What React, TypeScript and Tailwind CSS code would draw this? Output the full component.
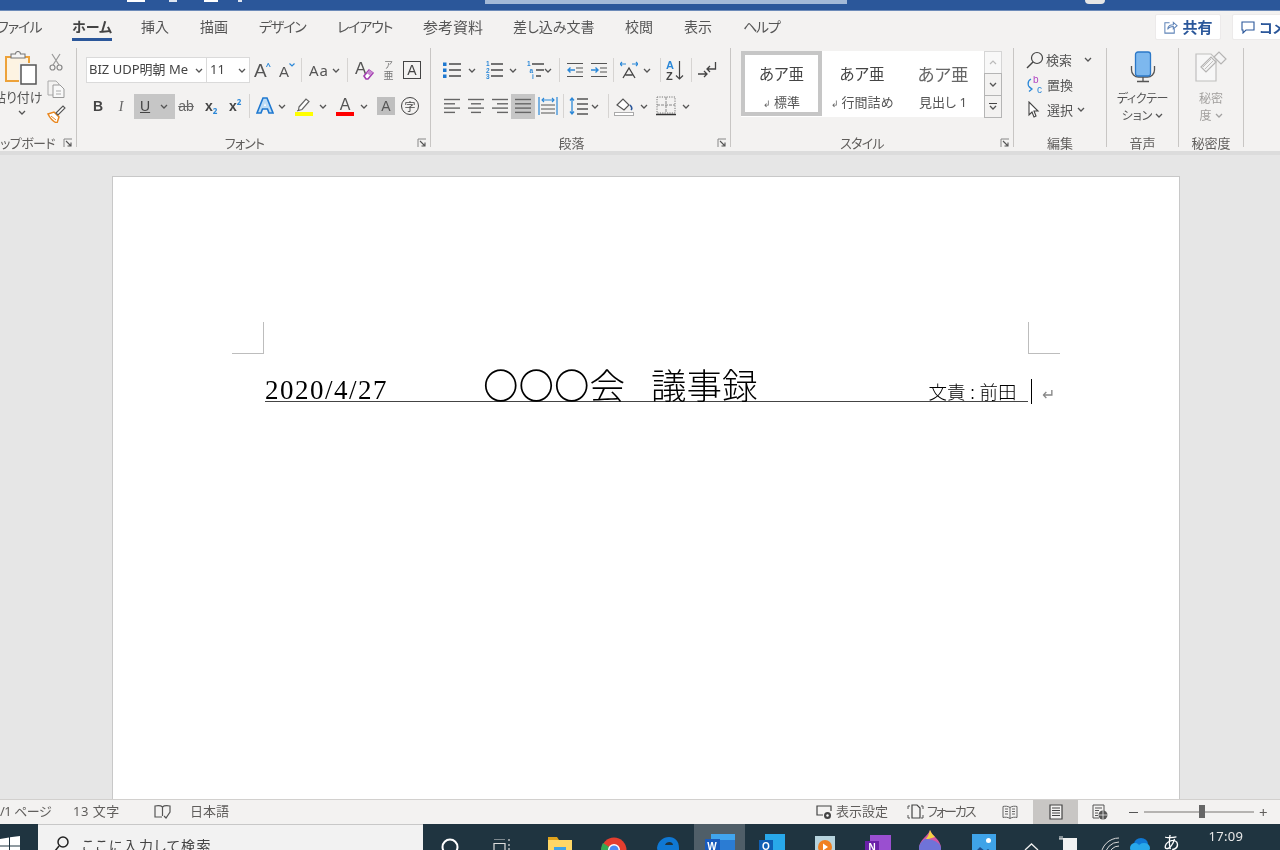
import React from "react";

const S = "#4a4a4a";
const B = "#2b88d8";

function Chev({ c = "" }: { c?: string }) {
  return (
    <svg viewBox="0 0 8 5" className={"w-[8px] h-[5px] shrink-0 " + c}>
      <path d="M1 1l3 3 3-3" fill="none" stroke="#555" strokeWidth="1.3" />
    </svg>
  );
}
function Sep({ c = "" }: { c?: string }) {
  return <div className={"w-px h-[24px] bg-[#d6d4d2] shrink-0 " + c} />;
}
function Launcher() {
  return (
    <svg viewBox="0 0 10 10" className="w-[10px] h-[10px] shrink-0">
      <path d="M1 9V1h8" fill="none" stroke="#888" strokeWidth="1" />
      <path d="M3 3l5 5M8 4.500V8H4.500" fill="none" stroke="#555" strokeWidth="1.100" />
    </svg>
  );
}
function Lines({ rows, c = "" }: { rows: [number, number][]; c?: string }) {
  return (
    <svg viewBox="0 0 18 18" className={"w-[18px] h-[18px] shrink-0 " + c}>
      {rows.map((r, i) => (
        <path key={i} d={`M${r[0]} ${2.5 + i * 4.3}H${r[1]}`} stroke="#666" strokeWidth="1.4" />
      ))}
    </svg>
  );
}
function ListIcon({ kind, c = "" }: { kind: "b" | "n" | "m"; c?: string }) {
  const labels = kind === "n" ? ["1", "2", "3"] : kind === "m" ? ["1", "a", "i"] : null;
  return (
    <svg viewBox="0 0 20 20" className={"w-[20px] h-[20px] shrink-0 " + c}>
      {labels
        ? labels.map((l, i) => (
            <text key={i} x={kind === "m" ? 1 + i * 2.5 : 2} y={6 + i * 6.5} fontSize="6.5" fontWeight="700" fill={B} fontFamily="Liberation Sans">
              {l}
            </text>
          ))
        : [0, 1, 2].map((i) => <rect key={i} x="1" y={2.5 + i * 6} width="3.5" height="3.5" fill="#1e78d0" />)}
      {kind === "m" ? (
        <path d="M6 4h12M10 10h8M10 16h5" stroke={S} strokeWidth="1.3" />
      ) : (
        <path d="M7 4h12M7 10h12M7 16h12" stroke={S} strokeWidth="1.3" />
      )}
    </svg>
  );
}
function IndentIcon({ out, c = "" }: { out?: boolean; c?: string }) {
  return (
    <svg viewBox="0 0 18 18" className={"w-[18px] h-[18px] shrink-0 " + c}>
      <path d="M1 2.500h16M1 15.500h16M10 7h7M10 11h7" stroke="#555" strokeWidth="1.200" />
      <path d={out ? "M9 9H2M4.500 6.500L2 9l2.500 2.500" : "M1 9h7M5.500 6.500L8 9l-2.500 2.500"} fill="none" stroke={B} strokeWidth="1.400" />
    </svg>
  );
}
function Paste() {
  return (
    <svg viewBox="0 0 33 34" className="w-[33px] h-[34px] shrink-0">
      <path d="M2 6h23v24H2z" fill="#fdf3e2" stroke="#eda23a" strokeWidth="2" />
      <path d="M7 7V3h4.500a2.500 2.500 0 0 1 5 0H21v4z" fill="#f5f5f5" stroke="#777" strokeWidth="1.100" />
      <path d="M15 12h18v22H15z" fill="#f3f2f1" />
      <path d="M17 14h15v19H17z" fill="#fff" stroke="#555" strokeWidth="1.500" />
    </svg>
  );
}

function Group({
  w,
  label,
  labelClass = "justify-center",
  launcher,
  children,
}: {
  w: string;
  label: string;
  labelClass?: string;
  launcher?: boolean;
  children: React.ReactNode;
}) {
  return (
    <div className={"relative h-[99px] border-r border-[#c8c6c4] flex flex-col shrink-0 " + w}>
      <div className="flex-1 min-h-0">{children}</div>
      <div className={"flex items-center h-[16px] -mb-[4px] text-[13px] leading-[16px] text-[#605e5c] whitespace-nowrap " + labelClass}>{label}</div>
      {launcher && (
        <div className="absolute right-[3px] -bottom-[1px] flex">
          <Launcher />
        </div>
      )}
    </div>
  );
}

function Tabs() {
  return (
    <div className="h-[32px] flex items-start bg-[#f3f2f1] text-[14px] text-[#555] whitespace-nowrap">
      <div className="w-[1280px] h-full flex items-start relative">
        <span className="w-[44px] pt-[6px] -ml-[3px] leading-[20px] tracking-[-1px] shrink-0">ファイル</span>
        <div className="ml-[31px] w-[40px] h-[30px] pt-[6px] leading-[20px] font-bold text-[#444] border-b-[3px] border-[#2b579a] shrink-0">ホーム</div>
        <span className="ml-[29px] w-[28px] pt-[6px] leading-[20px] shrink-0">挿入</span>
        <span className="ml-[31px] w-[28px] pt-[6px] leading-[20px] shrink-0">描画</span>
        <span className="ml-[31px] w-[47px] pt-[6px] leading-[20px] tracking-[-1.2px] shrink-0">デザイン</span>
        <span className="ml-[31px] w-[55px] pt-[6px] leading-[20px] tracking-[-1.2px] shrink-0">レイアウト</span>
        <span className="ml-[31px] w-[60px] pt-[6px] leading-[20px] text-[15px] shrink-0">参考資料</span>
        <span className="ml-[30px] w-[83px] pt-[6px] leading-[20px] shrink-0">差し込み文書</span>
        <span className="ml-[29px] w-[29px] pt-[6px] leading-[20px] shrink-0">校閲</span>
        <span className="ml-[30px] w-[29px] pt-[6px] leading-[20px] shrink-0">表示</span>
        <span className="ml-[30px] w-[36px] pt-[6px] leading-[20px] tracking-[-1.2px] shrink-0">ヘルプ</span>
        <div className="ml-[376px] mt-[3px] w-[66px] h-[26px] bg-white border border-[#eceaea] rounded-[2px] flex items-center justify-center gap-[4px] shrink-0">
          <svg viewBox="0 0 16 16" className="w-[15px] h-[15px]">
            <path d="M7 3H2v11h10V9" fill="none" stroke="#5f84b8" strokeWidth="1.100" />
            <path d="M5 10c0-4 3-5 6-5V2.500l4 3.500-4 3.500V7c-3 0-5 1-6 3z" fill="none" stroke="#5f84b8" strokeWidth="1.100" />
          </svg>
          <span className="font-bold text-[#2b579a] text-[15px]">共有</span>
        </div>
        <div className="ml-[11px] mt-[3px] w-[70px] h-[26px] bg-white border border-[#eceaea] rounded-[2px] flex items-center gap-[4px] pl-[8px] shrink-0">
          <svg viewBox="0 0 14 14" className="w-[14px] h-[14px] shrink-0">
            <path d="M1 2h12v8H5l-3 3v-3H1z" fill="none" stroke="#2b579a" strokeWidth="1.100" />
          </svg>
          <span className="font-bold text-[#2b579a] text-[14px]">コメント</span>
        </div>
      </div>
    </div>
  );
}

function FontGroup() {
  return (
    <div className="pt-[9px] h-full">
      <div className="flex items-center h-[26px] pl-[9px]">
        <div className="w-[121px] h-[26px] bg-white border border-[#dadada] flex items-center pl-[2px] pr-[3px] text-[13px] text-[#444] whitespace-nowrap shrink-0">
          <span className="flex-1 overflow-hidden">BIZ UDP明朝 Me</span>
          <Chev />
        </div>
        <div className="w-[43px] h-[26px] bg-white border border-[#dadada] border-l-0 flex items-center justify-between pl-[3px] pr-[3px] text-[13px] text-[#444] shrink-0">
          <span>11</span>
          <Chev />
        </div>
        <div className="ml-[4px] w-[18px] flex items-start text-[#555] shrink-0 leading-none">
          <span className="text-[19px] font-['Liberation_Sans']">A</span>
          <span className="text-[9px] text-[#2b88d8] font-bold -ml-[1px]">^</span>
        </div>
        <div className="ml-[7px] w-[17px] flex items-start text-[#555] shrink-0 leading-none">
          <span className="text-[15px] mt-[2px] font-['Liberation_Sans']">A</span>
          <svg viewBox="0 0 6 4" className="w-[6px] h-[4px] mt-[1px]"><path d="M.500.500L3 3 5.500.500" fill="none" stroke={B} strokeWidth="1.200" /></svg>
        </div>
        <Sep c="ml-[5px]" />
        <div className="ml-[7px] w-[32px] flex items-center gap-[3px] shrink-0 text-[15px] text-[#555] whitespace-nowrap">
          <span className="tracking-[1px]">Aa</span>
          <Chev />
        </div>
        <Sep c="ml-[6px]" />
        <svg viewBox="0 0 19 20" className="ml-[7px] w-[19px] h-[20px] shrink-0">
          <text x="0" y="14" fontSize="17" fill="#555" fontFamily="Liberation Sans">A</text>
          <path d="M9 16l5-6 4 3-5 6h-2z" fill="#fff" stroke="#a33cb0" strokeWidth="1.600" />
          <path d="M11.500 13l3.500 2.500 3-3-3.500-2.500z" fill="#c88bd0" />
        </svg>
        <div className="ml-[9px] w-[11px] flex flex-col items-center leading-[11px] text-[#777] shrink-0">
          <span className="text-[9px]">ア</span>
          <span className="text-[10px]">亜</span>
        </div>
        <div className="ml-[9px] w-[18px] h-[18px] border border-[#444] flex items-center justify-center text-[14px] leading-none text-[#444] shrink-0 font-['Liberation_Sans']">A</div>
      </div>
      <div className="flex items-center h-[26px] mt-[10px] text-[#444]">
        <span className="ml-[15px] w-[12px] text-[14px] font-bold text-center shrink-0 font-['Liberation_Sans']">B</span>
        <span className="ml-[12px] w-[10px] text-[14px] italic text-center shrink-0 text-[#666] font-['Liberation_Serif']">I</span>
        <div className="ml-[8px] w-[41px] h-[25px] bg-[#c6c6c6] flex items-center pl-[6px] gap-[10px] shrink-0">
          <span className="text-[14px] underline font-['Liberation_Sans']">U</span>
          <Chev />
        </div>
        <span className="ml-[2px] w-[18px] text-[14px] text-center line-through text-[#666] shrink-0 font-['Liberation_Sans']">ab</span>
        <div className="ml-[10px] w-[15px] flex items-baseline shrink-0 leading-none">
          <span className="text-[14px] font-bold font-['Liberation_Sans']">x</span>
          <span className="text-[8px] font-bold text-[#2b88d8] translate-y-[3px]">2</span>
        </div>
        <div className="ml-[9px] w-[15px] flex items-baseline shrink-0 leading-none">
          <span className="text-[14px] font-bold font-['Liberation_Sans']">x</span>
          <span className="text-[8px] font-bold text-[#2b88d8] -translate-y-[6px]">2</span>
        </div>
        <Sep c="ml-[5px]" />
        <svg viewBox="0 0 18 20" className="ml-[6px] w-[18px] h-[20px] shrink-0">
          <path d="M1 17L7 2h4l6 15h-4l-1.500-4h-5L5 17z" fill="#bcdcf5" stroke="#1e78d0" strokeWidth="1.600" />
          <path d="M8 10l1-3 1 3z" fill="#fff" />
        </svg>
        <Chev c="ml-[4px]" />
        <svg viewBox="0 0 18 20" className="ml-[9px] w-[18px] h-[20px] shrink-0">
          <path d="M4 11l7-8 3 2.500-7 8-3.500 1z" fill="#fff" stroke="#666" strokeWidth="1.200" />
          <path d="M2 15l2-1" stroke="#666" />
          <rect x="0" y="16" width="18" height="4" fill="#ffff00" />
        </svg>
        <Chev c="ml-[6px]" />
        <div className="ml-[9px] w-[18px] flex flex-col items-center shrink-0 leading-none">
          <span className="text-[16px] h-[15px] text-[#555] font-['Liberation_Sans']">A</span>
          <div className="w-[18px] h-[4px] bg-[#ff0000]" />
        </div>
        <Chev c="ml-[6px]" />
        <div className="ml-[9px] w-[18px] h-[18px] bg-[#bfbfbf] flex items-center justify-center text-[14px] text-[#555] shrink-0 font-['Liberation_Sans']">A</div>
        <div className="ml-[6px] w-[18px] h-[18px] rounded-full border border-[#444] flex items-center justify-center text-[11px] leading-none text-[#444] shrink-0">字</div>
      </div>
    </div>
  );
}

function ParaGroup() {
  return (
    <div className="pt-[9px] h-full">
      <div className="flex items-center h-[26px]">
        <ListIcon kind="b" c="ml-[11px]" />
        <Chev c="ml-[6px]" />
        <ListIcon kind="n" c="ml-[8px]" />
        <Chev c="ml-[5px]" />
        <ListIcon kind="m" c="ml-[9px]" />
        <Chev c="-ml-[2px]" />
        <Sep c="ml-[7px]" />
        <IndentIcon out c="ml-[6px]" />
        <IndentIcon c="ml-[6px]" />
        <Sep c="ml-[5px]" />
        <svg viewBox="0 0 18 20" className="ml-[6px] w-[18px] h-[20px] shrink-0">
          <path d="M3 18L9 8l6 10M5.500 15h7" fill="none" stroke="#444" strokeWidth="1.300" />
          <path d="M0 4h6M2 2L0 4l2 2M12 4h6M16 2l2 2-2 2" fill="none" stroke={B} strokeWidth="1.200" />
        </svg>
        <Chev c="ml-[5px]" />
        <Sep c="ml-[9px]" />
        <svg viewBox="0 0 18 22" className="ml-[5px] w-[18px] h-[22px] shrink-0">
          <text x="0" y="10" fontSize="11" fontWeight="700" fill="#2b88d8" fontFamily="Liberation Sans">A</text>
          <text x="0" y="21" fontSize="11" fontWeight="700" fill="#444" fontFamily="Liberation Sans">Z</text>
          <path d="M13.500 2v18M10 16.500l3.500 3.500 3.500-3.500" fill="none" stroke="#444" strokeWidth="1.200" />
        </svg>
        <Sep c="ml-[7px]" />
        <svg viewBox="0 0 20 18" className="ml-[5px] w-[20px] h-[18px] shrink-0">
          <path d="M1 13h9M7 10l3 3-3 3" fill="none" stroke="#444" strokeWidth="1.300" />
          <path d="M18.500 1v7H10M13 5l-3 3 3 3" fill="none" stroke="#444" strokeWidth="1.300" />
        </svg>
      </div>
      <div className="flex items-center h-[26px] mt-[10px]">
        <Lines rows={[[1, 17], [1, 12], [1, 17], [1, 12]]} c="ml-[12px]" />
        <Lines rows={[[1, 17], [4, 14], [1, 17], [4, 14]]} c="ml-[6px]" />
        <Lines rows={[[1, 17], [6, 17], [1, 17], [6, 17]]} c="ml-[6px]" />
        <div className="ml-[2px] w-[24px] h-[25px] bg-[#c6c6c6] flex items-center justify-center shrink-0">
          <Lines rows={[[1, 17], [1, 17], [1, 17], [1, 17]]} />
        </div>
        <svg viewBox="0 0 20 18" className="ml-[3px] w-[20px] h-[18px] shrink-0">
          <path d="M1 0v18M19 0v18" stroke={B} strokeWidth="1.200" />
          <path d="M4 3h12M6 1l-2 2 2 2M14 1l2 2-2 2" fill="none" stroke={B} strokeWidth="1.100" />
          <path d="M3 8h14M3 12h14M3 16h14" stroke="#555" strokeWidth="1.200" />
        </svg>
        <Sep c="ml-[5px]" />
        <svg viewBox="0 0 20 20" className="ml-[5px] w-[20px] h-[20px] shrink-0">
          <path d="M3 2v16M1 4.500L3 2l2 2.500M1 15.500L3 18l2-2.500" fill="none" stroke={B} strokeWidth="1.300" />
          <path d="M8 3h11M8 8h11M8 13h11M8 18h11" stroke="#555" strokeWidth="1.300" />
        </svg>
        <Chev c="ml-[2px]" />
        <Sep c="ml-[9px]" />
        <svg viewBox="0 0 20 20" className="ml-[5px] w-[20px] h-[20px] shrink-0">
          <path d="M3 9l6-6 6 6-5 5z" fill="#fff" stroke="#555" strokeWidth="1.200" />
          <path d="M16 9c2 2 2 4 1 5" fill="none" stroke="#2b579a" strokeWidth="1.600" />
          <rect x=".500" y="16.500" width="19" height="3" fill="#fff" stroke="#aaa" />
        </svg>
        <Chev c="ml-[6px]" />
        <svg viewBox="0 0 20 20" className="ml-[8px] w-[20px] h-[20px] shrink-0">
          <path d="M1 1h18v16H1z" fill="none" stroke="#777" strokeWidth="1" strokeDasharray="1.200 1.200" />
          <path d="M10 1v16M1 9h18" fill="none" stroke="#888" strokeWidth="1" strokeDasharray="3 1" />
          <path d="M0 18.500h20" stroke="#333" strokeWidth="1.500" />
        </svg>
        <Chev c="ml-[6px]" />
      </div>
    </div>
  );
}

function StyleCell({ top, label, arrow, c = "", topc = "" }: { top: string; label: string; arrow?: boolean; c?: string; topc?: string }) {
  return (
    <div className={"flex flex-col items-center h-[65px] shrink-0 " + c}>
      <span className={"mt-[12px] h-[22px] leading-[22px] whitespace-nowrap " + topc}>{top}</span>
      <span className="mt-[9px] text-[13px] leading-[16px] text-[#555] whitespace-nowrap">
        {arrow && <span className="text-[9px] mr-[3px] text-[#666]">↲</span>}
        {label}
      </span>
    </div>
  );
}

function StylesGroup() {
  return (
    <div className="pt-[3px] pl-[10px] flex">
      <div className="w-[243px] h-[66px] bg-white flex shrink-0 [font-feature-settings:'normal']">
        <div className="w-[81px] h-[65px] border-[4px] border-[#c6c6c6] flex flex-col items-center shrink-0">
          <span className="mt-[8px] h-[22px] leading-[22px] text-[15.500px] text-[#444] whitespace-nowrap">あア亜</span>
          <span className="mt-[9px] text-[13px] leading-[16px] text-[#555] whitespace-nowrap">
            <span className="text-[9px] mr-[3px] text-[#666]">↲</span>標準
          </span>
        </div>
        <StyleCell top="あア亜" label="行間詰め" arrow c="w-[80px]" topc="text-[15.500px] text-[#444]" />
        <StyleCell top="あア亜" label="見出し 1" c="w-[82px]" topc="text-[17.500px] text-[#666]" />
      </div>
      <div className="w-[18px] flex flex-col shrink-0">
        <div className="h-[23px] bg-[#f8f8f8] border border-[#d5d5d5] flex items-center justify-center">
          <svg viewBox="0 0 8 5" className="w-[8px] h-[5px]"><path d="M1 4l3-3 3 3" fill="none" stroke="#bbb" strokeWidth="1.200" /></svg>
        </div>
        <div className="h-[23px] -mt-px border border-[#b5b5b5] flex items-center justify-center">
          <Chev />
        </div>
        <div className="h-[23px] -mt-px border border-[#b5b5b5] flex flex-col items-center justify-center gap-[1px]">
          <div className="w-[8px] h-[1px] bg-[#444]" />
          <Chev />
        </div>
      </div>
    </div>
  );
}

function EditGroup() {
  return (
    <div className="-mt-[1px] pl-[12px] flex flex-col text-[13px] text-[#555] whitespace-nowrap">
      <div className="h-[25px] flex items-center">
        <svg viewBox="0 0 18 18" className="w-[18px] h-[18px] shrink-0">
          <circle cx="11" cy="7" r="5.500" fill="none" stroke="#444" strokeWidth="1.200" />
          <path d="M7 11l-6 6" stroke="#444" strokeWidth="1.500" />
        </svg>
        <span className="ml-[2px] leading-[18px]">検索</span>
        <Chev c="ml-[12px]" />
      </div>
      <div className="h-[25px] flex items-center">
        <svg viewBox="0 0 18 18" className="w-[18px] h-[18px] shrink-0">
          <text x="7" y="7" fontSize="10" fill="#b146c2" fontFamily="Liberation Sans">b</text>
          <text x="11" y="17" fontSize="10" fill="#2b88d8" fontFamily="Liberation Sans">c</text>
          <path d="M5 3C1 5 1 11 6 13M3 10.500L6 13l-3 2.500" fill="none" stroke={B} strokeWidth="1.300" />
        </svg>
        <span className="ml-[3px] leading-[18px]">置換</span>
      </div>
      <div className="h-[25px] flex items-center">
        <svg viewBox="0 0 18 18" className="w-[18px] h-[18px] shrink-0">
          <path d="M3 1v13l3-3 2 5 2-1-2-5h4z" fill="#fff" stroke="#444" strokeWidth="1.100" />
        </svg>
        <span className="ml-[3px] leading-[18px]">選択</span>
        <Chev c="ml-[4px]" />
      </div>
    </div>
  );
}

function VoiceGroup() {
  return (
    <div className="flex flex-col items-center pt-[3px] text-[12px] leading-[17px] text-[#555]">
      <svg viewBox="0 0 26 32" className="w-[26px] h-[32px] shrink-0">
        <path d="M1.500 15v4a7 7 0 0 0 7 7h9a7 7 0 0 0 7-7v-4M13 26v4M7 30.500h12" fill="none" stroke="#555" strokeWidth="1.300" />
        <rect x="5.500" y="1" width="15" height="24" rx="2.500" fill="#7db8ee" stroke="#2b78c8" strokeWidth="1.300" />
      </svg>
      <span className="mt-[7px] whitespace-nowrap tracking-[-.4px]">ディクテー</span>
      <span className="whitespace-nowrap flex items-center gap-[3px]">
        ション
        <Chev />
      </span>
    </div>
  );
}

function SensGroup() {
  return (
    <div className="flex flex-col items-center pt-[3px] text-[12px] leading-[17px] text-[#a19f9d]">
      <svg viewBox="0 0 32 32" className="w-[32px] h-[32px] shrink-0">
        <path d="M1 3h15l5 5v22H1z" fill="#f7f7f7" stroke="#c0bfbe" strokeWidth="1.200" />
        <path d="M6 16L16 6l5 5-10 10z" fill="#f4f4f4" stroke="#b5b4b3" strokeWidth="1.200" />
        <path d="M8 16l8-8M10 18l8-8" stroke="#c0bfbe" />
        <path d="M19 6l5-5 7 7-5 5z" fill="#f4f4f4" stroke="#b5b4b3" strokeWidth="1.200" />
      </svg>
      <span className="mt-[7px] whitespace-nowrap">秘密</span>
      <span className="whitespace-nowrap flex items-center gap-[3px]">
        度
        <Chev c="opacity-50" />
      </span>
    </div>
  );
}

function Ribbon() {
  return (
    <div className="h-[112px] pt-[5px] bg-[#f3f2f1] border-b-[4px] border-[#dcdcdc] flex shrink-0">
      <Group w="w-[77px]" label="クリップボード" labelClass="justify-end pr-[21px] tracking-[-.6px]" launcher>
        <div className="flex h-full">
          <div className="w-[44px] flex flex-col items-center shrink-0">
            <div className="pt-[3px] -ml-[3px]">
              <Paste />
            </div>
            <span className="mt-[3px] h-[18px] w-[41px] text-[13px] leading-[18px] text-[#555] whitespace-nowrap flex justify-end">貼り付け</span>
            <Chev c="mt-[4px]" />
          </div>
          <div className="w-[24px] flex flex-col items-center pt-[5px] shrink-0">
            <svg viewBox="0 0 14 18" className="w-[14px] h-[18px]">
              <path d="M3 1l7 11M11 1L4 12" stroke="#999" strokeWidth="1.200" />
              <circle cx="3.500" cy="14.500" r="2.500" fill="none" stroke="#888" strokeWidth="1.200" />
              <circle cx="10.500" cy="14.500" r="2.500" fill="none" stroke="#888" strokeWidth="1.200" />
            </svg>
            <svg viewBox="0 0 18 18" className="mt-[9px] w-[18px] h-[18px]">
              <path d="M1 1h8l3 3v11H1z" fill="#f3f2f1" stroke="#aaa" />
              <path d="M6 5h7l4 4v8.500H6z" fill="#f8f8f8" stroke="#999" />
              <path d="M9 11h5M9 14h5" stroke="#aaa" />
            </svg>
            <svg viewBox="0 0 19 18" className="mt-[7px] w-[19px] h-[18px]">
              <path d="M1 9l6-2 5 5-2 6c-3-1-7-5-9-9z" fill="#fff" stroke="#e9871f" strokeWidth="1.500" />
              <path d="M4 11l5 4" stroke="#e9871f" />
              <path d="M9 8l7-7 2 2-7 7z" fill="#fff" stroke="#555" strokeWidth="1.100" />
            </svg>
          </div>
        </div>
      </Group>
      <Group w="w-[354px]" label="フォント" labelClass="justify-center pr-[18px] tracking-[-.8px]" launcher>
        <FontGroup />
      </Group>
      <Group w="w-[300px]" label="段落" labelClass="justify-center pr-[18px]" launcher>
        <ParaGroup />
      </Group>
      <Group w="w-[283px]" label="スタイル" labelClass="justify-center pr-[20px] tracking-[-.8px]" launcher>
        <StylesGroup />
      </Group>
      <Group w="w-[93px]" label="編集">
        <EditGroup />
      </Group>
      <Group w="w-[72px]" label="音声">
        <VoiceGroup />
      </Group>
      <Group w="w-[65px]" label="秘密度">
        <SensGroup />
      </Group>
    </div>
  );
}

function Document() {
  return (
    <div className="flex-1 min-h-0 overflow-hidden bg-[#e6e6e6] pt-[21px]">
      <div className="ml-[112px] w-[1068px] h-[700px] bg-white border border-[#c8c8c8] pt-[145px]">
        <div className="mx-[119px] flex justify-between">
          <div className="w-[32px] h-[32px] border-r border-b border-[#bdbdbd]" />
          <div className="w-[32px] h-[32px] border-l border-b border-[#bdbdbd]" />
        </div>
        <div className="relative mt-[13px] ml-[152px] w-[763px] h-[35px] border-b border-[#444] flex items-end text-black whitespace-nowrap font-['Noto_Sans_CJK_JP',sans-serif] [font-feature-settings:'normal']">
          <span className="w-[123px] -mb-[3px] text-[27px] leading-[28px] tracking-[1.500px] font-['Liberation_Serif'] shrink-0">2020/4/27</span>
          <span className="ml-[95px] -mb-[1px] text-[35.500px] leading-[36px] font-light shrink-0">〇〇〇会</span>
          <span className="ml-[26px] -mb-[1px] text-[35.500px] leading-[36px] font-light shrink-0">議事録</span>
          <div className="ml-[171px] -mb-[2px] flex text-[18.500px] leading-[24px] font-light shrink-0">
            <span>文責</span>
            <span className="w-[14px] text-center">:</span>
            <span>前田</span>
          </div>
          <div className="absolute -right-[4px] -bottom-[3px] w-px h-[25px] bg-black" />
          <span className="absolute -right-[27px] -bottom-[1px] text-[16px] leading-[18px] text-[#888]">↵</span>
        </div>
      </div>
    </div>
  );
}

function StatusBar() {
  return (
    <div className="h-[25px] bg-[#f3f2f1] border-t border-[#d2d0ce] flex items-center text-[13px] text-[#605e5c] whitespace-nowrap shrink-0">
      <span className="-ml-[7px] w-[59px] tracking-[-.5px] shrink-0">1/1 ページ</span>
      <span className="ml-[21px] w-[47px] tracking-[.5px] shrink-0">13 文字</span>
      <svg viewBox="0 0 17 16" className="ml-[34px] w-[17px] h-[16px] shrink-0">
        <path d="M8.500 3C7 1.500 4 1.500 1 2v11h7M8.500 3C10 1.500 13 1.500 16 2v6l-4 6-2-2M8.500 3v9" fill="none" stroke="#555" strokeWidth="1.200" />
      </svg>
      <span className="ml-[19px] w-[40px] shrink-0">日本語</span>
      <svg viewBox="0 0 17 16" className="ml-[586px] w-[17px] h-[16px] shrink-0">
        <path d="M7 11H1V2h14v5" fill="none" stroke="#444" strokeWidth="1.200" />
        <circle cx="11.500" cy="11.500" r="3.500" fill="#444" />
        <circle cx="11.500" cy="11.500" r="1.200" fill="#fff" />
      </svg>
      <span className="ml-[3px] w-[53px] shrink-0">表示設定</span>
      <svg viewBox="0 0 17 16" className="ml-[18px] w-[17px] h-[16px] shrink-0">
        <path d="M1 5V2h2M14 2h2v3M1 11v3h2M14 14h2v-3" fill="none" stroke="#555" strokeWidth="1" />
        <path d="M5 1h5l3 3v10H5z" fill="none" stroke="#444" strokeWidth="1.200" />
      </svg>
      <span className="ml-[3px] w-[50px] tracking-[-2px] shrink-0">フォーカス</span>
      <svg viewBox="0 0 16 15" className="ml-[25px] w-[16px] h-[15px] shrink-0">
        <path d="M8 2.500C6 1 3 1 1 1.500v11c2-.5 5-.5 7 1 2-1.500 5-1.500 7-1v-11C13 1 10 1 8 2.500zM8 2.500v11M3 4h3M3 6.500h3M3 9h3M10 4h3M10 6.500h3M10 9h3" fill="none" stroke="#666" strokeWidth="1" />
      </svg>
      <div className="ml-[15px] w-[45px] h-[24px] bg-[#c8c6c4] flex items-center justify-center shrink-0">
        <svg viewBox="0 0 14 16" className="w-[14px] h-[16px]">
          <path d="M1 1h12v14H1z" fill="#f3f2f1" stroke="#444" strokeWidth="1.200" />
          <path d="M3 4h8M3 6.500h8M3 9h8M3 11.500h8" stroke="#444" strokeWidth="1" />
        </svg>
      </div>
      <svg viewBox="0 0 16 16" className="ml-[14px] w-[16px] h-[16px] shrink-0">
        <path d="M1 1h11v6M7 14H1V1M3 4h7M3 6.500h4M3 9h3M3 11.500h3" fill="none" stroke="#555" strokeWidth="1" />
        <circle cx="11" cy="11" r="4.500" fill="#555" />
        <path d="M6.500 11h9M11 6.500v9" stroke="#fff" strokeWidth=".7" />
      </svg>
      <div className="ml-[21px] w-[9px] h-px bg-[#555] shrink-0" />
      <div className="relative ml-[6px] w-[110px] h-[2px] bg-[#b5b3b1] shrink-0">
        <div className="absolute left-[55px] -top-[6px] w-[6px] h-[13px] bg-[#666]" />
      </div>
      <span className="ml-[5px] text-[15px] leading-none w-[10px] shrink-0">+</span>
    </div>
  );
}

function Taskbar() {
  return (
    <div className="h-[26px] overflow-hidden bg-[#1f3440] flex items-start shrink-0 relative">
      <div className="w-[38px] h-[26px] pt-[12px] shrink-0">
        <svg viewBox="0 0 20 20" className="w-[20px] h-[20px]">
          <path d="M0 3l9-1.500V9.500H0zM10 1.300L20 0v9.500H10zM0 10.500h9v8L0 17zM10 10.500h10V20l-10-1.500z" fill="#fff" />
        </svg>
      </div>
      <div className="w-[385px] h-[26px] bg-[#f2f2f2] border-t border-[#c8c8c8] flex items-start shrink-0">
        <svg viewBox="0 0 16 20" className="ml-[16px] mt-[11px] w-[16px] h-[20px] shrink-0">
          <circle cx="9" cy="6" r="5" fill="none" stroke="#222" strokeWidth="1.500" />
          <path d="M5 10l-4 5" stroke="#222" strokeWidth="1.500" />
        </svg>
        <span className="ml-[12px] mt-[11px] text-[14px] leading-[20px] text-[#444] tracking-[1.300px] whitespace-nowrap">ここに入力して検索</span>
      </div>
      <svg viewBox="0 0 18 18" className="ml-[18px] mt-[14px] w-[18px] h-[18px] shrink-0">
        <circle cx="9" cy="9" r="7.500" fill="none" stroke="#fff" strokeWidth="2" />
      </svg>
      <svg viewBox="0 0 20 20" className="ml-[34px] mt-[15px] w-[20px] h-[20px] shrink-0">
        <path d="M1 0h11M1 4.500h11v7H1zM16 0v2M16 5v2M16 9v2" fill="none" stroke="#ddd" strokeWidth="1.200" />
      </svg>
      <svg viewBox="0 0 24 22" className="ml-[35px] mt-[13px] w-[24px] h-[22px] shrink-0">
        <path d="M0 0h9l2 3H0z" fill="#e0a31c" />
        <path d="M0 3h24v19H0z" fill="#ffd766" />
        <rect x="6" y="10" width="12" height="12" fill="#3fa3e8" />
      </svg>
      <svg viewBox="0 0 26 26" className="ml-[29px] mt-[13px] w-[26px] h-[26px] shrink-0">
        <circle cx="13" cy="13" r="12.500" fill="#e33e2f" />
        <path d="M13 13L24 19A12.500 12.500 0 0 1 7 24z" fill="#ffce3a" />
        <path d="M13 13L7 24A12.500 12.500 0 0 1 2 6z" fill="#34a853" />
        <circle cx="13" cy="13" r="6" fill="#fff" />
        <circle cx="13" cy="13" r="4.600" fill="#4a8af4" />
      </svg>
      <svg viewBox="0 0 24 24" className="ml-[29px] mt-[12px] w-[24px] h-[24px] shrink-0">
        <path d="M1 12C2 5 7 1 13 1c6 0 10 4 10 11v2H9c1 3 5 4 12 1v6c-8 3-16 1-17-6-1 3-2 3-3-3zM9 9h8c0-4-7-4-8 0z" fill="#0f78d4" />
      </svg>
      <div className="ml-[14px] w-[51px] h-[26px] bg-[#4f5e68] flex justify-center pt-[10px] shrink-0">
        <div className="relative w-[30px] h-[24px]">
          <div className="absolute left-[6px] top-0 w-[24px] h-[24px] bg-[#2b7cd3]" />
          <div className="absolute left-[6px] top-0 w-[24px] h-[6px] bg-[#41a5ee]" />
          <div className="absolute left-0 top-[5px] w-[15px] h-[15px] bg-[#185abd] text-white text-[10px] leading-[15px] text-center font-bold font-['Liberation_Sans']">W</div>
        </div>
      </div>
      <div className="ml-[14px] mt-[10px] relative w-[26px] h-[24px] shrink-0">
        <div className="absolute left-[6px] top-0 w-[20px] h-[20px] bg-[#28a8ea]" />
        <div className="absolute left-[0px] top-[6px] w-[14px] h-[14px] bg-[#0f5fb4] text-white text-[10px] leading-[14px] text-center font-bold font-['Liberation_Sans']">O</div>
      </div>
      <div className="ml-[30px] mt-[12px] w-[20px] h-[24px] bg-[#b6d3dd] flex justify-center pt-[4px] shrink-0">
        <svg viewBox="0 0 14 14" className="w-[14px] h-[14px]">
          <circle cx="7" cy="7" r="7" fill="#f08020" />
          <path d="M5 3.500l5 3.500-5 3.500z" fill="#fff" />
        </svg>
      </div>
      <div className="ml-[30px] mt-[11px] relative w-[26px] h-[24px] shrink-0">
        <div className="absolute left-[5px] top-0 w-[21px] h-[24px] bg-[#9a4fd0]" />
        <div className="absolute left-0 top-[6px] w-[14px] h-[14px] bg-[#6a1fa8] text-white text-[10px] leading-[14px] text-center font-bold font-['Liberation_Sans']">N</div>
      </div>
      <svg viewBox="0 0 22 26" className="ml-[28px] mt-[6px] w-[22px] h-[26px] shrink-0">
        <path d="M11 0c2 6 11 10 11 18a11 8 0 0 1-22 0C0 10 9 6 11 0z" fill="#d356a5" />
        <path d="M11 0c1 3 3 5 5 7l-10 3c3-3 4-6 5-10z" fill="#f5d442" />
        <path d="M0 18c0-4 3-7 6-9 6 0 12 2 15 6l1 3a11 8 0 0 1-22 0z" fill="#6f73d8" />
      </svg>
      <div className="ml-[31px] mt-[10px] w-[24px] h-[24px] bg-[#3fa3e8] relative overflow-hidden shrink-0">
        <div className="absolute right-[5px] top-[4px] w-[5px] h-[5px] rounded-full bg-white" />
        <svg viewBox="0 0 24 10" className="absolute left-0 top-[11px] w-[24px] h-[10px]">
          <path d="M0 10l8-8 5 4 3-2 8 6z" fill="#1f4e8c" />
        </svg>
      </div>
      <svg viewBox="0 0 15 10" className="ml-[28px] mt-[18px] w-[15px] h-[10px] shrink-0">
        <path d="M1 8l6.500-6L14 8" fill="none" stroke="#eee" strokeWidth="1.300" />
      </svg>
      <svg viewBox="0 0 18 14" className="ml-[20px] mt-[12px] w-[18px] h-[14px] shrink-0">
        <rect x="4" y="2" width="14" height="12" fill="#f2f2f2" />
        <path d="M0 3h4M1 0v3M3 0v3" stroke="#eee" />
      </svg>
      <svg viewBox="0 0 20 20" className="ml-[23px] mt-[12px] w-[20px] h-[20px] shrink-0">
        <path d="M1 20a18 18 0 0 1 18-18M5 20a14 14 0 0 1 14-14M9 20a10 10 0 0 1 10-10" fill="none" stroke="#d8d8d8" strokeWidth="1" />
      </svg>
      <svg viewBox="0 0 20 14" className="ml-[10px] mt-[13px] w-[20px] h-[14px] shrink-0">
        <ellipse cx="11" cy="7" rx="7" ry="6" fill="#0f78d4" />
        <ellipse cx="5" cy="11" rx="5" ry="5" fill="#28a8ea" />
        <ellipse cx="14" cy="11" rx="6" ry="5" fill="#28a8ea" />
      </svg>
      <span className="ml-[13px] mt-[7px] text-[17px] leading-[24px] text-white shrink-0">あ</span>
      <span className="ml-[29px] mt-[3px] text-[13px] leading-[18px] text-[#e8e8e8] tracking-[.3px] shrink-0 font-['Noto_Sans']">17:09</span>
    </div>
  );
}

export default function App() {
  return (
    <div className="w-[1280px] h-[850px] overflow-hidden flex flex-col bg-[#f3f2f1] font-['Noto_Sans','Noto_Sans_CJK_JP',sans-serif] [font-feature-settings:'palt'] [filter:blur(0.45px)]">
      <div className="h-[11px] bg-[#2b579a] border-b border-[#6d8bb9] shrink-0 flex items-start">
        <div className="ml-[127px] w-[18px] h-[2px] bg-white shrink-0" />
        <div className="ml-[24px] w-[8px] h-[2px] bg-[#dfe6f1] shrink-0" />
        <div className="ml-[27px] w-[14px] h-[2px] bg-white shrink-0" />
        <div className="ml-[20px] w-[4px] h-[2px] bg-[#dfe6f1] shrink-0" />
        <div className="ml-[243px] w-[362px] h-[4px] bg-[#a3b9d7] shrink-0" />
        <div className="ml-[238px] w-[20px] h-[4px] rounded-b-[10px] bg-[#e6e6e6] shrink-0" />
      </div>
      <Tabs />
      <Ribbon />
      <Document />
      <StatusBar />
      <Taskbar />
    </div>
  );
}
